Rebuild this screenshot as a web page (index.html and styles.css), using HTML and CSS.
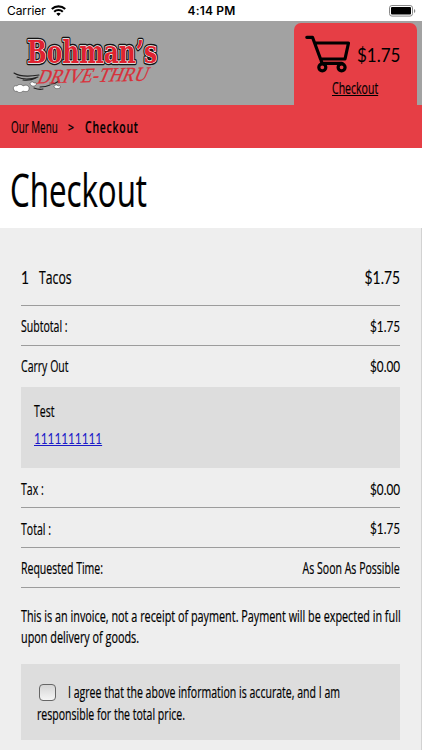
FILE: index.html
```html
<!DOCTYPE html>
<html lang="en">
<head>
    <meta charset="UTF-8">
    <meta name="viewport" content="width=device-width, initial-scale=1.0">
    <title>Checkout | Bohman's Drive-Thru</title>
    <link rel="stylesheet" href="styles.css">
</head>
<body>
    <div class="status-bar">
        <div class="carrier">
            <span>Carrier</span>
            <svg width="15" height="11" viewBox="0 0 15 11" fill="none" stroke="#000" stroke-width="2.1">
                <path d="M.8 4.1a9.6 9.6 0 0 1 13.4 0"/>
                <path d="M3.2 6.7a6.1 6.1 0 0 1 8.6 0"/>
                <path d="M7.5 11 5.3 8.7a3.2 3.2 0 0 1 4.4 0z" fill="#000" stroke="none"/>
            </svg>
        </div>
        <div class="time">4:14 PM</div>
        <svg class="battery" width="27" height="12" viewBox="0 0 27 12">
            <rect x=".5" y=".5" width="23" height="10.6" rx="2.4" fill="none" stroke="#888"/>
            <rect x="2" y="2" width="20" height="7.6" rx="1" fill="#000"/>
            <path d="M25 4v4q1.300-.6 1.300-2T25 4z" fill="#888"/>
        </svg>
    </div>

    <header class="header">
        <svg class="logo" width="240" height="76" viewBox="8 25 240 76">
            <g fill="none" stroke="#222" stroke-width="1.100" stroke-linecap="round">
                <path d="M14 73q8 5 25 2M17 77q9 4 21 0M23 80q7 1 13-2"/>
                <path d="M34 88q5 2 9 1M40 87q6 0 10-2M51 84q4 0 8-3"/>
            </g>
            <g fill="#fff" stroke="#333" stroke-width=".5">
                <path d="M14 90c-2-3 1-5 3-4 1-2 5-2 6 0 3-2 7 0 6 3 0 3-4 3-6 2-2 2-5 2-6 0-1 1-3 0-3-1z"/>
                <path d="M30 84c0-2 3-3 4-1 2-1 3 1 2 2-2 2-5 1-6-1zM54 87c0-2 3-3 4-1 2-1 3 0 2 2-2 1-5 1-6-1z"/>
            </g>
            <g class="logo-name">
                <text x="27" y="63.300" textLength="130" lengthAdjust="spacingAndGlyphs" class="logo-outline">Bohman’s</text>
                <text x="27" y="63.300" textLength="130" lengthAdjust="spacingAndGlyphs" class="logo-fill">Bohman’s</text>
            </g>
            <text class="logo-sub" transform="translate(36 83.500) rotate(-1.500) skewX(-24)" textLength="110" lengthAdjust="spacingAndGlyphs">DRIVE-THRU</text>
        </svg>
        <div class="cart">
            <div class="cart-top">
                <svg width="46" height="38" viewBox="0 0 46 38" fill="none" stroke="#000" stroke-width="3.200" stroke-linecap="round" stroke-linejoin="round">
                    <path d="M1.800 2.300H7.500L17 28M10 8h33.500L40 24H15.500"/>
                    <path d="M17 28.300h20"/>
                    <circle cx="17.300" cy="32.300" r="3.500"/>
                    <circle cx="36.600" cy="32.300" r="3.500"/>
                </svg>
                <span class="narrow cart-price">$1.75</span>
            </div>
            <a class="narrow cart-link">Checkout</a>
        </div>
    </header>

    <nav class="breadcrumb">
        <span class="narrow crumb-menu">Our Menu</span>
        <span class="narrow crumb-arrow">&gt;</span>
        <span class="narrow crumb-current">Checkout</span>
    </nav>

    <div class="title">
        <h1 class="narrow">Checkout</h1>
    </div>

    <main class="order">
        <div class="row item">
            <div class="item-name">
                <span class="narrow price">1</span>
                <span class="narrow">Tacos</span>
            </div>
            <span class="narrow right price">$1.75</span>
        </div>
        <div class="row">
            <span class="narrow">Subtotal :</span>
            <span class="narrow right price">$1.75</span>
        </div>
        <div class="row plain">
            <span class="narrow">Carry Out</span>
            <span class="narrow right price">$0.00</span>
        </div>
        <div class="box customer">
            <div><span class="narrow">Test</span></div>
            <div><a class="narrow phone">1111111111</a></div>
        </div>
        <div class="row">
            <span class="narrow">Tax :</span>
            <span class="narrow right price">$0.00</span>
        </div>
        <div class="row">
            <span class="narrow">Total :</span>
            <span class="narrow right price">$1.75</span>
        </div>
        <div class="row">
            <span class="narrow">Requested Time:</span>
            <span class="narrow right">As Soon As Possible</span>
        </div>
        <p class="narrow notice">This is an invoice, not a receipt of payment. Payment will be expected in full<br>upon delivery of goods.</p>
        <div class="box agree">
            <label>
                <span class="agree-line"><input type="checkbox"><span class="narrow">I agree that the above information is accurate, and I am</span></span>
                <span class="narrow">responsible for the total price.</span>
            </label>
        </div>
    </main>
</body>
</html>
```
FILE: styles.css
```css
* {
    box-sizing: border-box;
}
body {
    margin: 0;
    height: 750px;
    overflow: hidden;
    background: #fff;
    color: #000;
    font-family: "Open Sans", sans-serif;
    font-size: 15.5px;
}
/* condensed lettering */
.narrow {
    display: inline-block;
    white-space: nowrap;
    transform: scaleX(0.68);
    transform-origin: left center;
    -webkit-text-stroke: 0.2px;
}
.right {
    transform-origin: right center;
}
.price {
    font-family: Lato, sans-serif;
    font-size: 14.5px;
    transform: scaleX(0.81);
    -webkit-text-stroke: 0.1px;
}
.status-bar {
    display: grid;
    grid-template-columns: 1fr auto 1fr;
    align-items: center;
    height: 21px;
    padding: 0 6px 0 7px;
    font-family: Inter, sans-serif;
    font-size: 12px;
}
.carrier {
    display: flex;
    align-items: center;
    gap: 5px;
    letter-spacing: -0.1px;
}
.time {
    font-weight: 600;
    letter-spacing: 0.2px;
}
.battery {
    justify-self: end;
}
.header {
    display: flex;
    justify-content: space-between;
    height: 84px;
    padding: 2px 5.5px 0 8px;
    background: #a2a2a2;
}
.logo {
    margin-top: 2px;
    overflow: visible;
}
.logo-name {
    font-family: "DejaVu Serif", serif;
    font-weight: bold;
    font-size: 32.5px;
}
.logo-outline {
    fill: #111;
    stroke: #111;
    stroke-width: 4.4px;
    stroke-linejoin: round;
}
.logo-fill {
    fill: #df2330;
    stroke: #fff;
    stroke-width: 1.4px;
    paint-order: stroke;
}
.logo-sub {
    font-family: "Liberation Serif", serif;
    font-size: 20px;
    fill: #d9303a;
    stroke: #d9303a;
    stroke-width: 0.3px;
}
.cart {
    flex: none;
    width: 123px;
    padding: 11px 0 0 11px;
    border-radius: 7px 7px 0 0;
    background: #e63e45;
}
.cart-top {
    display: flex;
    align-items: center;
    gap: 6px;
    height: 40px;
}
.cart-price {
    font-family: Lato, sans-serif;
    font-size: 20px;
    transform: scaleX(0.85);
    -webkit-text-stroke: 0;
}
.cart-link {
    margin-left: 27.5px;
    line-height: 28px;
    text-decoration: underline;
}
.breadcrumb {
    display: grid;
    grid-template-columns: 57px 16.5px 1fr;
    align-items: center;
    height: 43px;
    padding-left: 11px;
    background: #e63e45;
}
.crumb-menu {
    transform: scaleX(0.635);
}
.crumb-arrow {
    font-size: 13px;
    font-weight: 600;
    transform: scaleX(0.8);
}
.crumb-current {
    font-weight: 600;
    letter-spacing: 1.2px;
    transform: scaleX(0.67);
}
.title {
    height: 80px;
    padding-left: 10px;
}
h1 {
    margin: 0;
    font-size: 46px;
    font-weight: 500;
    line-height: 82px;
    -webkit-text-stroke: 1.4px;
}
.order {
    height: 522px;
    padding: 34px 21px 0 21px;
    border-right: 1px solid #d2d2d2;
    background: #eee;
}
.row {
    display: flex;
    justify-content: space-between;
    align-items: center;
    height: 39.7px;
    padding-top: 2px;
    border-bottom: 1px solid #9c9c9c;
}
.item {
    height: 44px;
    padding: 0 0 13px;
    font-size: 18px;
}
.item .price {
    font-size: 18px;
    transform: scaleX(0.77);
}
.item-name {
    display: flex;
    align-items: center;
    gap: 8px;
}
.plain {
    padding-top: 1px;
    border-bottom: none;
}
.box {
    background: #ddd;
}
.customer {
    height: 81px;
    margin: 1.3px 0 1px;
    padding: 11px 13px;
    line-height: 27.5px;
}
.phone {
    color: #1a1ac8;
    font-family: Lato, sans-serif;
    font-size: 14.5px;
    text-decoration: underline;
    transform: scaleX(0.81);
    -webkit-text-stroke: 0;
}
.notice {
    width: 379px;
    margin: 18px 0 15.5px;
    line-height: 21.5px;
    transform: scaleX(0.699);
}
.agree {
    height: 76px;
    padding: 17px 16px;
    line-height: 22px;
}
.agree-line {
    display: flex;
    align-items: center;
}
input[type="checkbox"] {
    flex: none;
    appearance: none;
    width: 17px;
    height: 17px;
    margin: 0 12px 0 2px;
    border: 1px solid #666;
    border-radius: 4px;
    background: linear-gradient(#d5d5d5, #f5f5f5);
}
```
